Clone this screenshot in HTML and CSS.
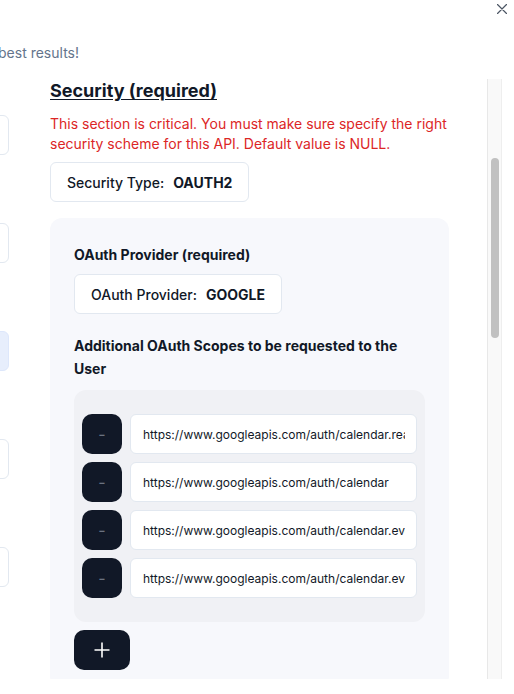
FILE: index.html
```html
<!DOCTYPE html>
<html lang="en">
<head>
<meta charset="utf-8">
<title>Security settings</title>
<link rel="stylesheet" href="styles.css">
</head>
<body>
<div class="modal">
  <button class="close" aria-label="Close">
    <svg width="10" height="10" viewBox="0 0 10 10"><path d="M0.5 0.5 L9.5 9.5 M9.5 0.5 L0.5 9.5" stroke="#4b5563" stroke-width="1.2" fill="none" stroke-linecap="round"/></svg>
  </button>
  <div class="hint"><span>Fill in as many fields as you can to get the best results!</span></div>
  <div class="columns">
    <div class="left-col">
      <div class="field"></div>
      <div class="field"></div>
      <div class="field field-active"></div>
      <div class="field"></div>
      <div class="field"></div>
    </div>
    <div class="scroll">
      <div class="scroll-content">
        <h2 class="title">Security (required)</h2>
        <p class="warning">This section is critical. You must make sure specify the right security scheme for this API. Default value is NULL.</p>
        <div class="select-box"><span class="select-label">Security Type:</span><span class="select-value">OAUTH2</span></div>
        <div class="panel">
          <div class="label">OAuth Provider (required)</div>
          <div class="select-box provider"><span class="select-label">OAuth Provider:</span><span class="select-value">GOOGLE</span></div>
          <div class="label scopes-label">Additional OAuth Scopes to be requested to the User</div>
          <div class="scopes">
            <div class="scope-row"><button class="minus">-</button><input class="scope-input" type="text" value="https://www.googleapis.com/auth/calendar.readonly"></div>
            <div class="scope-row"><button class="minus">-</button><input class="scope-input" type="text" value="https://www.googleapis.com/auth/calendar"></div>
            <div class="scope-row"><button class="minus">-</button><input class="scope-input" type="text" value="https://www.googleapis.com/auth/calendar.events"></div>
            <div class="scope-row"><button class="minus">-</button><input class="scope-input" type="text" value="https://www.googleapis.com/auth/calendar.events.readonly"></div>
          </div>
          <button class="plus" aria-label="Add scope">
            <svg width="16" height="16" viewBox="0 0 16 16"><path d="M8 0.5 V15.5 M0.5 8 H15.5" stroke="#ffffff" stroke-width="1.6" fill="none"/></svg>
          </button>
        </div>
      </div>
      <div class="track"><div class="thumb"></div></div>
    </div>
  </div>
</div>
</body>
</html>
```

FILE: styles.css
```css
* { box-sizing: border-box; }
html, body { margin: 0; padding: 0; background: #ffffff; overflow: hidden; }
body {
  width: 514px;
  height: 694px;
  font-family: "Inter", "Noto Sans", sans-serif;
  color: #111827;
}
.modal { position: relative; height: 694px; padding-top: 43px; }
.close {
  position: absolute;
  top: 4px;
  right: 7px;
  width: 10px;
  height: 10px;
  padding: 0;
  border: 0;
  background: none;
  display: flex;
}
.hint {
  width: 79px;
  display: flex;
  justify-content: flex-end;
  white-space: nowrap;
  font-size: 14px;
  line-height: 20px;
  color: #64748b;
}
.columns {
  display: flex;
  gap: 41px;
  height: 600px;
  margin-top: 16px;
  margin-right: 12px;
}
.left-col {
  flex: none;
  width: 200px;
  margin-left: -191px;
  padding-top: 36px;
  display: flex;
  flex-direction: column;
  gap: 68px;
}
.field {
  height: 40px;
  border: 1px solid #e2e8f0;
  border-radius: 6px;
  background: #ffffff;
}
.field-active { background: #e7eefc; border-color: #dde7fb; }
.scroll { flex: 1; display: flex; overflow: hidden; }
.scroll-content { width: 399px; flex: none; overflow: hidden; }
.track {
  margin-left: auto;
  width: 15px;
  flex: none;
  background: #f9f9f9;
  border-left: 1px solid #e8e8e8;
  border-right: 1px solid #eeeeee;
  padding-top: 79px;
  padding-left: 3px;
}
.thumb {
  width: 8px;
  height: 180px;
  border-radius: 4px;
  background: #c1c1c1;
}
.title {
  margin: 0;
  font-size: 18px;
  line-height: 24px;
  font-weight: 700;
  text-decoration: underline;
  text-underline-offset: 2px;
}
.warning {
  margin: 11px 0 0;
  font-size: 14px;
  line-height: 20px;
  color: #dc2626;
}
.select-box {
  display: inline-flex;
  align-items: center;
  gap: 9px;
  height: 40px;
  margin-top: 8px;
  padding: 0 16px;
  border: 1px solid #e2e8f0;
  border-radius: 6px;
  background: #ffffff;
  font-size: 14px;
}
.select-label { font-weight: 500; }
.select-value { font-weight: 700; }
.panel {
  margin-top: 16px;
  background: #f7f8fc;
  border-radius: 12px;
  padding: 25px 24px 24px;
  height: 470px;
}
.label {
  font-size: 14px;
  line-height: 23px;
  font-weight: 700;
}
.panel .provider { margin-top: 8px; }
.scopes-label { margin-top: 20px; }
.scopes {
  margin-top: 10px;
  background: #f0f1f5;
  border-radius: 12px;
  padding: 24px 8px;
  display: flex;
  flex-direction: column;
  gap: 8px;
}
.scope-row { display: flex; gap: 8px; }
.minus {
  flex: none;
  width: 40px;
  height: 40px;
  border: 0;
  border-radius: 10px;
  background: #111827;
  color: #6b7280;
  font-family: "Inter", sans-serif;
  font-size: 16px;
  padding: 0;
}
.scope-input {
  flex: 1;
  min-width: 0;
  height: 40px;
  border: 1px solid #e2e8f0;
  border-radius: 6px;
  background: #ffffff;
  padding: 0 11px 0 12px;
  font-family: "Inter", sans-serif;
  font-size: 12px;
  color: #111827;
}
.plus {
  margin-top: 8px;
  width: 56px;
  height: 40px;
  border: 0;
  border-radius: 10px;
  background: #111827;
  display: flex;
  align-items: center;
  justify-content: center;
  padding: 0;
}
```
